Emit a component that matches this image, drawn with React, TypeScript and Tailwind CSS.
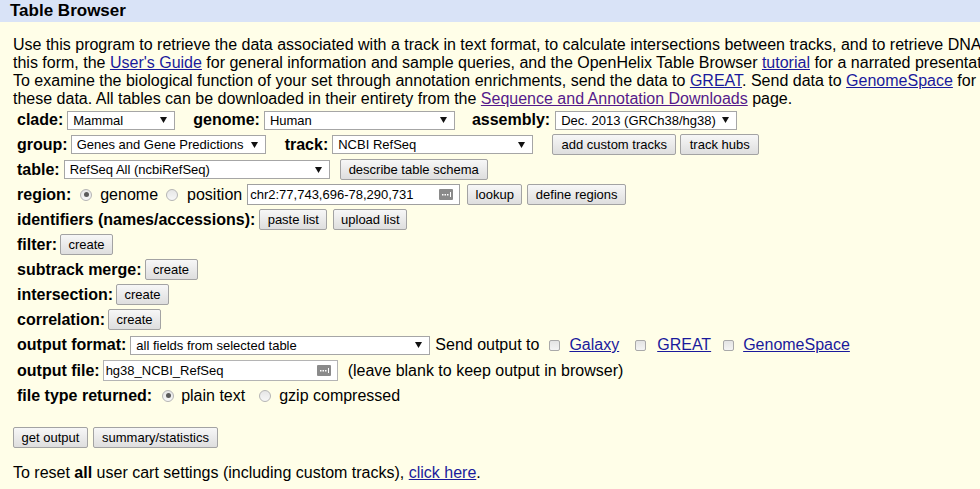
import React from "react";

const FONT = { fontFamily: '"Liberation Sans", Arial, sans-serif' };

function Lbl({ children, className = "" }: { children: React.ReactNode; className?: string }) {
  return <span className={"font-bold text-[16px] leading-[18px] " + className}>{children}</span>;
}

function Arrow() {
  return (
    <svg width="7" height="6" viewBox="0 0 7 6" className="shrink-0">
      <path d="M0 0 H7 L3.5 6 Z" fill="#111" />
    </svg>
  );
}

function Sel({ text, className = "" }: { text: string; className?: string }) {
  return (
    <div
      className={
        "h-[19px] bg-white border border-[#a6a6a6] flex items-center justify-between pl-[5px] pr-[7px] text-[13px] leading-[15px] shrink-0 " +
        className
      }
    >
      <span className="truncate">{text}</span>
      <Arrow />
    </div>
  );
}

function Btn({ text, className = "" }: { text: string; className?: string }) {
  return (
    <div
      className={
        "h-[21px] border border-[#a3a3a3] rounded-[2px] bg-gradient-to-b from-[#f7f7f7] to-[#dedede] flex items-center justify-center text-[13px] leading-[15px] shrink-0 " +
        className
      }
    >
      {text}
    </div>
  );
}

function Radio({ checked = false, className = "" }: { checked?: boolean; className?: string }) {
  return (
    <span
      className={
        "w-[12px] h-[12px] rounded-full border border-[#b5b5b5] bg-gradient-to-b from-[#e6e6e6] to-[#f7f7f7] flex items-center justify-center shrink-0 " +
        className
      }
    >
      {checked && <span className="w-[5px] h-[5px] rounded-full bg-[#5a5a5a]" />}
    </span>
  );
}

function Check({ className = "" }: { className?: string }) {
  return (
    <span
      className={
        "w-[11px] h-[11px] rounded-[2px] border border-[#a9a9a9] bg-gradient-to-b from-[#e4e4e4] to-[#f4f4f4] shrink-0 " +
        className
      }
    />
  );
}

function KeyIcon() {
  return (
    <svg width="14" height="11" viewBox="0 0 14 11" className="shrink-0">
      <rect x="0" y="0" width="14" height="11" rx="1" fill="#8a8a8a" />
      <rect x="3" y="5" width="1.5" height="1.5" fill="#fff" />
      <rect x="5.5" y="5" width="1.5" height="1.5" fill="#fff" />
      <rect x="8" y="5" width="1.5" height="1.5" fill="#fff" />
      <rect x="11" y="3" width="1" height="5" fill="#fff" />
    </svg>
  );
}

function TextIn({ text, className = "", border = "border-[#a0a0a0]" }: { text: string; className?: string; border?: string }) {
  return (
    <div
      className={
        "h-[21px] bg-white border " +
        border +
        " flex items-center justify-between pl-[2px] pr-[6px] text-[13px] leading-[15px] shrink-0 " +
        className
      }
    >
      <span>{text}</span>
      <KeyIcon />
    </div>
  );
}

const A = ({ children, visited = false }: { children: React.ReactNode; visited?: boolean }) => (
  <span className={"underline " + (visited ? "text-[#551a8b]" : "text-[#1a1a9c]")}>{children}</span>
);

function Row({ children, className = "h-[25px]" }: { children: React.ReactNode; className?: string }) {
  return <div className={"flex items-center whitespace-nowrap pl-[17px] " + className}>{children}</div>;
}

export default function App() {
  return (
    <div style={FONT} className="w-full min-h-[489px] overflow-hidden bg-[#fffee8] text-black">
      <div className="h-[22px] bg-[#d9e3f7] pl-[10px] flex items-center">
        <span className="font-bold text-[17px] leading-[20px]">Table Browser</span>
      </div>

      <div className="mt-[14px] pl-[13px] text-[16px] leading-[18px] whitespace-nowrap">
        <div>
          Use this program to retrieve the data associated with a track in text format, to calculate intersections between tracks, and to retrieve DNA sequence covered by a track.
        </div>
        <div>
          this form, the <A>User's Guide</A> for general information and sample queries, and the OpenHelix Table Browser <A>tutorial</A> for a narrated presentation of the software features and usage.
        </div>
        <div>
          To examine the biological function of your set through annotation enrichments, send the data to <A>GREAT</A>. Send data to <A>GenomeSpace</A> for use with diverse computational tools.
        </div>
        <div>
          these data. All tables can be downloaded in their entirety from the <A visited>Sequence and Annotation Downloads</A> page.
        </div>
      </div>

      <Row className="h-[24px]">
        <Lbl>clade:</Lbl>
        <Sel text="Mammal" className="ml-[4px] w-[108px]" />
        <Lbl className="ml-[18px]">genome:</Lbl>
        <Sel text="Human" className="ml-[4px] w-[191px]" />
        <Lbl className="ml-[17px]">assembly:</Lbl>
        <Sel text="Dec. 2013 (GRCh38/hg38)" className="ml-[5px] w-[182px]" />
      </Row>
      <Row>
        <Lbl>group:</Lbl>
        <Sel text="Genes and Gene Predictions" className="ml-[3px] w-[195px]" />
        <Lbl className="ml-[19px]">track:</Lbl>
        <Sel text="NCBI RefSeq" className="ml-[4px] w-[201px]" />
        <Btn text="add custom tracks" className="ml-[19px] w-[124px]" />
        <Btn text="track hubs" className="ml-[4px] w-[79px]" />
      </Row>
      <Row>
        <Lbl>table:</Lbl>
        <Sel text="RefSeq All (ncbiRefSeq)" className="ml-[4px] w-[266px]" />
        <Btn text="describe table schema" className="ml-[10px] w-[148px]" />
      </Row>
      <Row>
        <Lbl>region:</Lbl>
        <Radio checked className="ml-[9px]" />
        <span className="ml-[8px] text-[16px] leading-[18px]">genome</span>
        <Radio className="ml-[8px]" />
        <span className="ml-[9px] text-[16px] leading-[18px]">position</span>
        <TextIn text="chr2:77,743,696-78,290,731" className="ml-[5px] w-[213px]" />
        <Btn text="lookup" className="ml-[7px] w-[55px]" />
        <Btn text="define regions" className="ml-[5px] w-[99px]" />
      </Row>
      <Row>
        <Lbl>identifiers (names/accessions):</Lbl>
        <Btn text="paste list" className="ml-[4px] w-[68px]" />
        <Btn text="upload list" className="ml-[6px] w-[74px]" />
      </Row>
      <Row>
        <Lbl>filter:</Lbl>
        <Btn text="create" className="ml-[3px] w-[53px]" />
      </Row>
      <Row>
        <Lbl>subtrack merge:</Lbl>
        <Btn text="create" className="ml-[3px] w-[53px]" />
      </Row>
      <Row>
        <Lbl>intersection:</Lbl>
        <Btn text="create" className="ml-[3px] w-[53px]" />
      </Row>
      <Row>
        <Lbl>correlation:</Lbl>
        <Btn text="create" className="ml-[3px] w-[53px]" />
      </Row>
      <Row className="h-[26px]">
        <Lbl>output format:</Lbl>
        <Sel text="all fields from selected table" className="ml-[4px] w-[300px]" />
        <span className="ml-[5px] text-[16px] leading-[18px]">Send output to</span>
        <Check className="ml-[10px]" />
        <span className="ml-[9px] text-[16px] leading-[18px]">
          <A>Galaxy</A>
        </span>
        <Check className="ml-[16px]" />
        <span className="ml-[11px] text-[16px] leading-[18px]">
          <A>GREAT</A>
        </span>
        <Check className="ml-[12px]" />
        <span className="ml-[9px] text-[16px] leading-[18px]">
          <A>GenomeSpace</A>
        </span>
      </Row>
      <Row>
        <Lbl>output file:</Lbl>
        <TextIn text="hg38_NCBI_RefSeq" border="border-[#b4b4b4]" className="ml-[3px] w-[235px]" />
        <span className="ml-[10px] text-[16px] leading-[18px]">(leave blank to keep output in browser)</span>
      </Row>
      <Row>
        <Lbl>file type returned:</Lbl>
        <Radio checked className="ml-[10px]" />
        <span className="ml-[7px] text-[16px] leading-[18px]">plain text</span>
        <Radio className="ml-[14px]" />
        <span className="ml-[8px] text-[16px] leading-[18px]">gzip compressed</span>
      </Row>

      <div className="mt-[19px] pl-[13px] flex items-center">
        <Btn text="get output" className="w-[75px]" />
        <Btn text="summary/statistics" className="ml-[5px] w-[125px]" />
      </div>

      <div className="mt-[16px] pl-[13px] text-[16px] leading-[18px] whitespace-nowrap">
        To reset <b>all</b> user cart settings (including custom tracks), <A>click here</A>.
      </div>
    </div>
  );
}
